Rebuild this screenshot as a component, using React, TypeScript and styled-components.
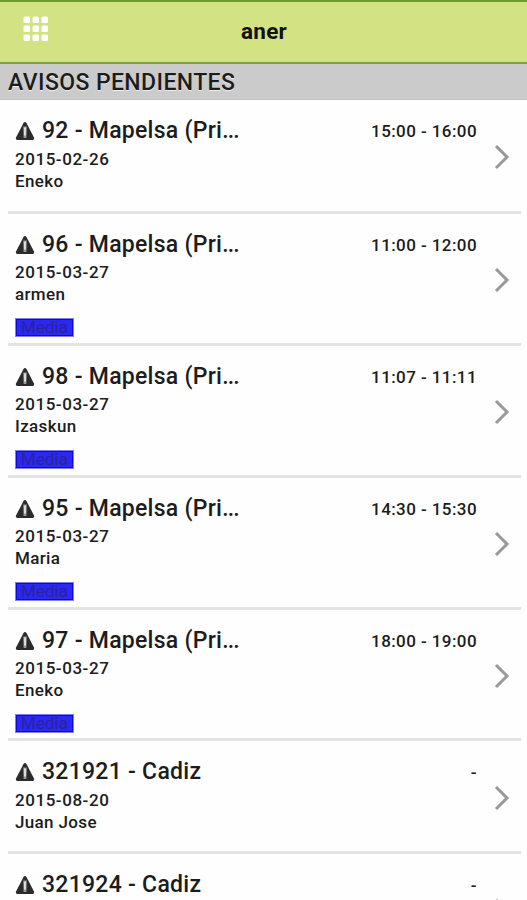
import React from 'react';
import styled, { createGlobalStyle } from 'styled-components';

const GlobalStyle = createGlobalStyle`
  * {
    box-sizing: border-box;
  }

  body {
    margin: 0;
    background: #fefefe;
    font-family: Roboto, 'Liberation Sans', sans-serif;
    font-weight: 500;
    color: #1c1c1c;
  }
`;

const Screen = styled.main`
  height: 900px;
  overflow: hidden;
`;

const Header = styled.header`
  height: 64px;
  display: grid;
  grid-template-columns: 72px 1fr 72px;
  background: #d3e384;
  border-top: 2px solid #6f9c2c;
  border-bottom: 2px solid #7d9f49;
`;

const MenuButton = styled.button`
  display: flex;
  align-items: flex-start;
  padding: 14px 0 0 23px;
  border: 0;
  background: none;
`;

const Title = styled.h1`
  margin: 0;
  padding-left: 1px;
  font-size: 22.5px;
  font-weight: 700;
  line-height: 58px;
  letter-spacing: 0.3px;
  text-align: center;
  color: #111;
`;

const SectionTitle = styled.h2`
  height: 36px;
  margin: 0;
  padding-left: 8px;
  background: #cbcbcb;
  border-bottom: 1px solid #c2c2c2;
  font-size: 23px;
  font-weight: 500;
  line-height: 37px;
  letter-spacing: 0.4px;
  text-shadow: 0 1px 0 #eee;
`;

const List = styled.ul`
  margin: 0;
  padding: 0 6px 0 8px;
  list-style: none;
`;

const Row = styled.li<{ $height: number }>`
  height: ${({ $height }) => $height}px;
  display: flex;
  justify-content: space-between;
  padding: 17px 11px 0 7px;
  border-bottom: 3px solid #e3e3e3;
`;

const Info = styled.div`
  width: 240px;
`;

const Name = styled.h3`
  display: flex;
  align-items: center;
  gap: 7px;
  margin: 0;
  font-size: 23px;
  font-weight: 500;
  line-height: 28px;
  letter-spacing: 0.27px;
  white-space: nowrap;
`;

const Ellipsis = styled.span`
  margin-left: -7px;
  letter-spacing: -0.9px;
`;

const Details = styled.div<{ $raised?: boolean }>`
  margin-top: ${({ $raised }) => ($raised ? 2 : 3)}px;
`;

const Detail = styled.p`
  margin: 0;
  font-size: 17px;
  line-height: 22px;
  letter-spacing: 0.55px;
  white-space: nowrap;
`;

const Person = styled(Detail)`
  letter-spacing: 0.35px;
`;

const Priority = styled.span`
  display: block;
  width: 59px;
  height: 19px;
  margin-top: 13px;
  border: 1px solid #8080ee;
  background: #2a28f4;
  box-shadow: inset 0 0 0 1px #1008d8;
  font-size: 17px;
  font-weight: 400;
  line-height: 17px;
  text-align: center;
  color: #2c2396;
`;

const Side = styled.div`
  display: flex;
  gap: 17px;
`;

const Time = styled.time`
  font-size: 17px;
  line-height: 29px;
  letter-spacing: 0.42px;
  white-space: nowrap;
`;

const Arrow = styled.svg`
  align-self: center;
  margin-top: -14px;
`;

const GridIcon = () => (
  <svg width="26" height="26" viewBox="0 0 26 26" fill="#fff">
    {[0, 9, 18].map((y) =>
      [0, 9, 18].map((x) => (
        <rect key={`${x}-${y}`} x={x + 0.5} y={y + 0.5} width="6.5" height="6.5" rx="1.5" />
      ))
    )}
  </svg>
);

const WarningIcon = () => (
  <svg width="20" height="20" viewBox="0 0 20 20">
    <path d="M8.4 2.2Q10 0 11.6 2.2L19 16.6Q19.6 19 17.5 19H2.5Q.4 19 1 16.6Z" fill="#2b2b2b" />
    <path d="M8.2 5.5H11.8L11.4 17H8.6Z" fill="#999" />
    <path d="M9.2 6.5H10.8V14.5H9.2Z" fill="#eee" />
  </svg>
);

const ChevronIcon = () => (
  <Arrow width="16" height="26" viewBox="0 0 16 26">
    <path d="M2 2L13 13L2 24" fill="none" stroke="#999" strokeWidth="3" />
  </Arrow>
);

interface Notice {
  name: string;
  truncated?: boolean;
  date?: string;
  person?: string;
  time: string;
  height: number;
  priority?: string;
}

const notices: Notice[] = [
  { name: '92 - Mapelsa (Pri', truncated: true, date: '2015-02-26', person: 'Eneko', time: '15:00 - 16:00', height: 114 },
  { name: '96 - Mapelsa (Pri', truncated: true, date: '2015-03-27', person: 'armen', time: '11:00 - 12:00', height: 132, priority: 'Media' },
  { name: '98 - Mapelsa (Pri', truncated: true, date: '2015-03-27', person: 'Izaskun', time: '11:07 - 11:11', height: 132, priority: 'Media' },
  { name: '95 - Mapelsa (Pri', truncated: true, date: '2015-03-27', person: 'Maria', time: '14:30 - 15:30', height: 132, priority: 'Media' },
  { name: '97 - Mapelsa (Pri', truncated: true, date: '2015-03-27', person: 'Eneko', time: '18:00 - 19:00', height: 131, priority: 'Media' },
  { name: '321921 - Cadiz', date: '2015-08-20', person: 'Juan Jose', time: '-', height: 113 },
  { name: '321924 - Cadiz', time: '-', height: 113 },
];

const App: React.FC = () => {
  return (
    <Screen>
      <GlobalStyle />
      <Header>
        <MenuButton aria-label="Menu">
          <GridIcon />
        </MenuButton>
        <Title>aner</Title>
      </Header>
      <SectionTitle>AVISOS PENDIENTES</SectionTitle>
      <List>
        {notices.map((notice) => (
          <Row key={notice.name} $height={notice.height}>
            <Info>
              <Name>
                <WarningIcon />
                {notice.name}
                {notice.truncated && <Ellipsis>...</Ellipsis>}
              </Name>
              <Details $raised={Boolean(notice.priority)}>
                {notice.date && <Detail>{notice.date}</Detail>}
                {notice.person && <Person>{notice.person}</Person>}
                {notice.priority && <Priority>{notice.priority}</Priority>}
              </Details>
            </Info>
            <Side>
              <Time>{notice.time}</Time>
              <ChevronIcon />
            </Side>
          </Row>
        ))}
      </List>
    </Screen>
  );
};

export default App;
